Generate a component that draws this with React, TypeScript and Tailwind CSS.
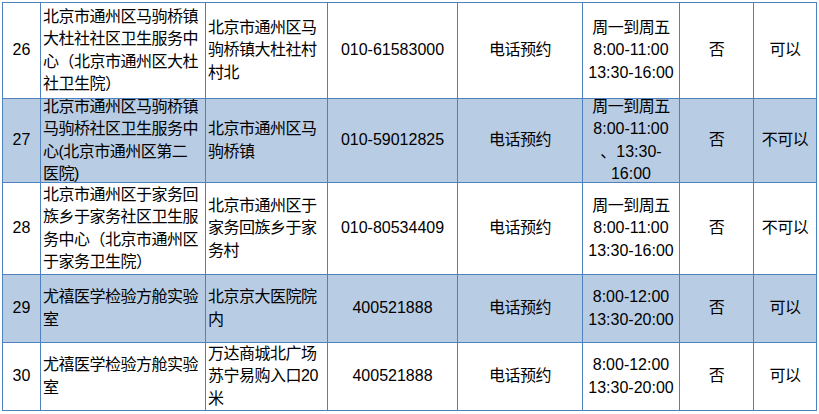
import React from "react";

type Row = {
  no: string;
  name: string[];
  addr: string[];
  phone: string;
  hours: string[];
  last: string;
  blue: boolean;
};

const rows: Row[] = [
  {
    no: "26",
    name: ["北京市通州区马驹桥镇", "大杜社社区卫生服务中", "心（北京市通州区大杜", "社卫生院）"],
    addr: ["北京市通州区马", "驹桥镇大杜社村", "村北"],
    phone: "010-61583000",
    hours: ["周一到周五", "8:00-11:00", "13:30-16:00"],
    last: "可以",
    blue: false,
  },
  {
    no: "27",
    name: ["北京市通州区马驹桥镇", "马驹桥社区卫生服务中", "心(北京市通州区第二", "医院)"],
    addr: ["北京市通州区马", "驹桥镇"],
    phone: "010-59012825",
    hours: ["周一到周五", "8:00-11:00", "、13:30-", "16:00"],
    last: "不可以",
    blue: true,
  },
  {
    no: "28",
    name: ["北京市通州区于家务回", "族乡于家务社区卫生服", "务中心（北京市通州区", "于家务卫生院）"],
    addr: ["北京市通州区于", "家务回族乡于家", "务村"],
    phone: "010-80534409",
    hours: ["周一到周五", "8:00-11:00", "13:30-16:00"],
    last: "不可以",
    blue: false,
  },
  {
    no: "29",
    name: ["尤禧医学检验方舱实验", "室"],
    addr: ["北京京大医院院", "内"],
    phone: "400521888",
    hours: ["8:00-12:00", "13:30-20:00"],
    last: "可以",
    blue: true,
  },
  {
    no: "30",
    name: ["尤禧医学检验方舱实验", "室"],
    addr: ["万达商城北广场", "苏宁易购入口20", "米"],
    phone: "400521888",
    hours: ["8:00-12:00", "13:30-20:00"],
    last: "可以",
    blue: false,
  },
];

const cjk = /[\u4e00-\u9fff]/;

function Cell({
  lines,
  blue,
  left,
}: {
  lines: string[];
  blue: boolean;
  left?: boolean;
}) {
  return (
    <div
      className={
        "flex flex-col justify-center overflow-hidden leading-[22.5px] " +
        (left ? "items-start pl-[2px] " : "items-center ") +
        (blue ? "bg-[#b8cce4]" : "bg-white")
      }
    >
      {lines.map((l, i) => (
        <div
          key={i}
          className={"whitespace-nowrap " + (cjk.test(l) ? "tracking-[-0.5px]" : "")}
        >
          {l}
        </div>
      ))}
    </div>
  );
}

export default function App() {
  return (
    <div
      className="w-[819px] h-[414px] bg-white pt-[2px] pl-[2px] text-[16px] text-black"
      style={{ fontFamily: '"Liberation Sans", "Noto Sans CJK SC", sans-serif' }}
    >
      <div className="grid w-fit bg-[#4f81bd] p-px gap-px grid-cols-[37px_164px_121px_129px_124px_96px_73px_62px] grid-rows-[95px_83px_91px_67px_67px]">
        {rows.map((r) => (
          <React.Fragment key={r.no}>
            <Cell lines={[r.no]} blue={r.blue} />
            <Cell lines={r.name} blue={r.blue} left />
            <Cell lines={r.addr} blue={r.blue} left />
            <Cell lines={[r.phone]} blue={r.blue} />
            <Cell lines={["电话预约"]} blue={r.blue} />
            <Cell lines={r.hours} blue={r.blue} />
            <Cell lines={["否"]} blue={r.blue} />
            <Cell lines={[r.last]} blue={r.blue} />
          </React.Fragment>
        ))}
      </div>
    </div>
  );
}
